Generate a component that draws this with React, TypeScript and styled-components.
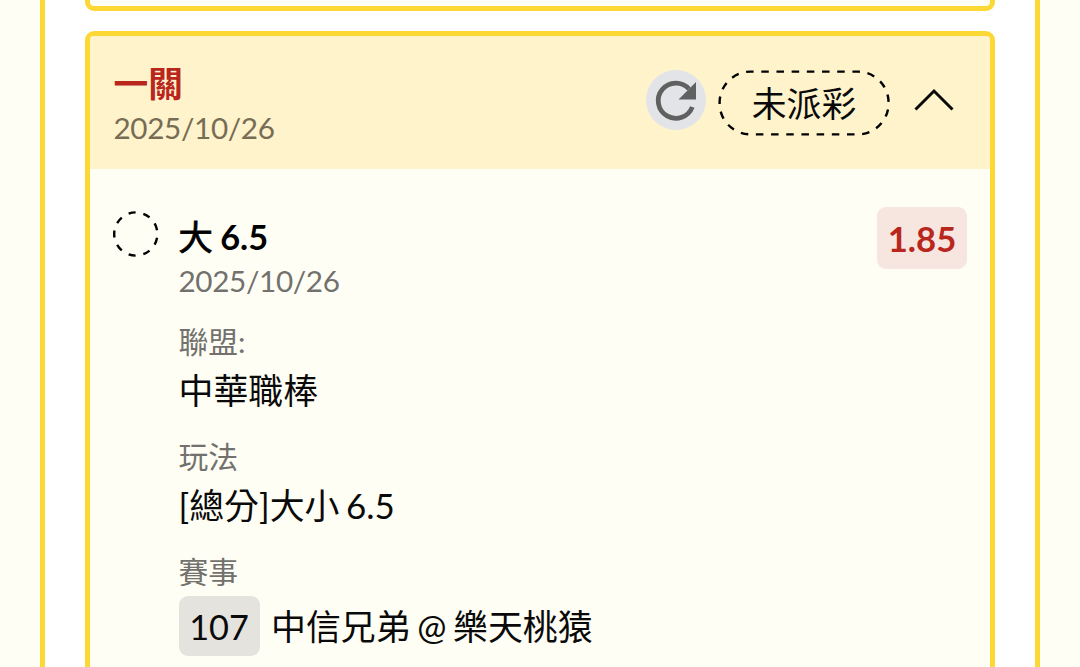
import { ReactNode } from "react";
import styled, { createGlobalStyle } from "styled-components";

const yellow = '#fdd835';
const cream = '#fffef5';
const red = '#b9261d';

const GlobalStyle = createGlobalStyle`
  * {
    box-sizing: border-box;
  }

  body {
    margin: 0;
    background: ${cream};
    font-family: Lato, "Noto Sans CJK TC", sans-serif;
    color: #0a0a0a;
  }
`;

const Page = styled.main`
  display: flex;
  flex-direction: column;
  gap: 20px;
  width: 1000px;
  height: 667px;
  margin-left: 40px;
  padding: 0 40px;
  overflow: hidden;
  background: #fff;
  border: solid ${yellow};
  border-width: 0 5px;
`;

const PreviousTicket = styled.section`
  flex: none;
  height: 11px;
  background: ${cream};
  border: 5px solid ${yellow};
  border-top: 0;
  border-radius: 0 0 9px 9px;
`;

const Ticket = styled.section`
  flex: none;
  height: 700px;
  background: ${cream};
  border: 5px solid ${yellow};
  border-radius: 9px;
`;

const TicketHeader = styled.header`
  display: flex;
  justify-content: space-between;
  height: 133px;
  padding: 26px 36px 0 23.5px;
  background: #fff3cc;
  border-radius: 4px 4px 0 0;
`;

const Title = styled.h2`
  margin: 0;
  font-size: 34.7px;
  font-weight: 700;
  line-height: 44px;
  color: ${red};
`;

const DateText = styled.div<{ onHeader?: boolean }>`
  font-size: 29.7px;
  line-height: 43px;
  letter-spacing: -0.35px;
  color: ${props => props.onHeader ? '#776c54' : '#72716d'};
`;

const Actions = styled.div`
  display: flex;
  align-items: flex-start;
  padding-top: 8px;
`;

const RefreshButton = styled.button`
  display: flex;
  width: 60px;
  height: 60px;
  margin: 0 12px 0 0;
  padding: 0;
  background: #e3e4e7;
  border: 0;
  border-radius: 50%;
`;

const Status = styled.div`
  position: relative;
  width: 172px;
  height: 66px;
  font-size: 34.8px;
  line-height: 67px;
  text-align: center;
`;

const StatusOutline = styled.svg`
  position: absolute;
  inset: 0;
`;

const Chevron = styled.svg`
  margin: 16px 0 0 24px;
`;

const Bet = styled.div`
  display: flex;
  padding: 38px 23px 0 22.5px;
`;

const PendingMark = styled.svg`
  flex: none;
  margin: 4px 20px 0 0;
`;

const BetDetails = styled.div`
  flex: 1;
`;

const Pick = styled.h3`
  margin: 0;
  padding-top: 8px;
  font-size: 34.3px;
  font-weight: 700;
  line-height: 44px;
  word-spacing: -1px;
  color: #000;
`;

const PickSide = styled.span`
  font-weight: 400;
  -webkit-text-stroke: 0.8px #000;
`;

const Odds = styled.div`
  width: 90px;
  height: 62px;
  background: #f7e6e0;
  border-radius: 9px;
  font-size: 34.7px;
  font-weight: 700;
  line-height: 64px;
  text-align: center;
  color: ${red};
`;

const FieldBox = styled.div`
  height: 115px;
  padding-top: 18px;
`;

const FieldLabel = styled.div`
  font-size: 29.8px;
  line-height: 44px;
  color: #72716d;
`;

const FieldValue = styled.div<{ tall?: boolean }>`
  display: flex;
  align-items: center;
  height: ${props => props.tall ? 64 : 53}px;
  font-size: 34.9px;
  line-height: 53px;
  word-spacing: -2.3px;
  white-space: pre;
`;

const MatchNumber = styled.span`
  width: 81px;
  height: 60px;
  margin-right: 11.5px;
  background: #e5e3dd;
  border-radius: 9px;
  font-size: 34.3px;
  line-height: 62px;
  text-align: center;
`;

function Field({ label, tall, children }: { label: string, tall?: boolean, children: ReactNode }) {
  return (
    <FieldBox>
      <FieldLabel>{label}</FieldLabel>
      <FieldValue tall={tall}>{children}</FieldValue>
    </FieldBox>
  );
}

export default function App() {
  return (
    <>
      <GlobalStyle />
      <Page>
        <PreviousTicket />
        <Ticket>
          <TicketHeader>
            <div>
              <Title>一關</Title>
              <DateText onHeader>2025/10/26</DateText>
            </div>
            <Actions>
              <RefreshButton aria-label="refresh">
                <svg width="60" height="60" viewBox="0 0 60 60">
                  <path
                    d="M46.3 37 A17.6 17.6 0 1 1 43 19"
                    fill="none"
                    stroke="#606060"
                    strokeWidth="4.8"
                  />
                  <path d="M50 12 V29.5 H32.5 Z" fill="#606060" />
                </svg>
              </RefreshButton>
              <Status>
                <StatusOutline width="172" height="66" viewBox="0 0 172 66">
                  <rect
                    x="1.6"
                    y="1.6"
                    width="169"
                    height="62.8"
                    rx="31"
                    fill="none"
                    stroke="#000"
                    strokeWidth="2.4"
                    pathLength="409.6"
                    strokeDasharray="7.5 7.67"
                    strokeDashoffset="4.5"
                  />
                </StatusOutline>
                未派彩
              </Status>
              <Chevron width="40" height="28" viewBox="0 0 40 28">
                <path d="M1.5 23.5 L20 5 L38.5 23.5" fill="none" stroke="#0a0a0a" strokeWidth="3" />
              </Chevron>
            </Actions>
          </TicketHeader>
          <Bet>
            <PendingMark width="46" height="46" viewBox="0 0 46 46">
              <circle
                cx="22.8"
                cy="23"
                r="21.6"
                fill="none"
                stroke="#000"
                strokeWidth="2.4"
                pathLength="360"
                strokeDasharray="19 21"
                strokeDashoffset="-10.5"
              />
            </PendingMark>
            <BetDetails>
              <Pick><PickSide>大</PickSide> 6.5</Pick>
              <DateText>2025/10/26</DateText>
              <Field label="聯盟:">中華職棒</Field>
              <Field label="玩法">[總分]大小 6.5</Field>
              <Field label="賽事" tall>
                <MatchNumber>107</MatchNumber>
                中信兄弟 @ 樂天桃猿
              </Field>
            </BetDetails>
            <Odds>1.85</Odds>
          </Bet>
        </Ticket>
      </Page>
    </>
  );
}
